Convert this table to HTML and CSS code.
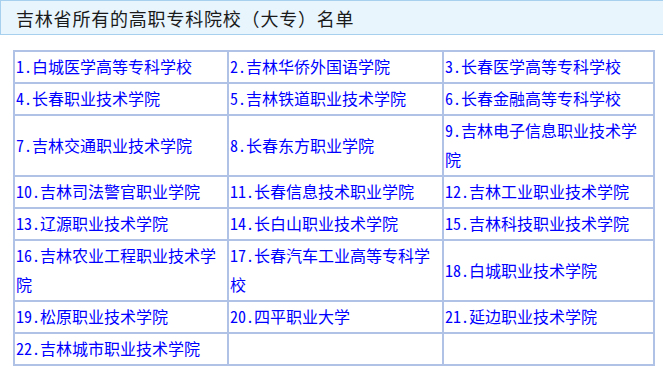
FILE: index.html
```html
<!DOCTYPE html>
<html lang="zh-CN">
<head>
<meta charset="utf-8">
<title>吉林省所有的高职专科院校（大专）名单</title>
<link rel="stylesheet" href="styles.css">
</head>
<body>
<div class="page">
  <h2 class="title">吉林省所有的高职专科院校（大专）名单</h2>
  <table class="list">
    <colgroup>
      <col class="c1"><col class="c2"><col class="c3">
    </colgroup>
    <tbody>
      <tr><td>1.白城医学高等专科学校</td><td>2.吉林华侨外国语学院</td><td>3.长春医学高等专科学校</td></tr>
      <tr><td>4.长春职业技术学院</td><td>5.吉林铁道职业技术学院</td><td>6.长春金融高等专科学校</td></tr>
      <tr><td>7.吉林交通职业技术学院</td><td>8.长春东方职业学院</td><td>9.吉林电子信息职业技术学院</td></tr>
      <tr><td>10.吉林司法警官职业学院</td><td>11.长春信息技术职业学院</td><td>12.吉林工业职业技术学院</td></tr>
      <tr><td>13.辽源职业技术学院</td><td>14.长白山职业技术学院</td><td>15.吉林科技职业技术学院</td></tr>
      <tr><td>16.吉林农业工程职业技术学院</td><td>17.长春汽车工业高等专科学校</td><td>18.白城职业技术学院</td></tr>
      <tr><td>19.松原职业技术学院</td><td>20.四平职业大学</td><td>21.延边职业技术学院</td></tr>
      <tr><td>22.吉林城市职业技术学院</td><td></td><td></td></tr>
    </tbody>
  </table>
</div>
</body>
</html>
```

FILE: styles.css
```css
html, body {
  margin: 0;
  padding: 0;
  background: #ffffff;
}

.page {
  width: 663px;
  overflow: hidden;
}

.title {
  margin: 0;
  height: 35px;
  width: 700px;
  box-sizing: border-box;
  background: #e8f5fd;
  border: 1px solid #a7d0ee;
  padding-left: 15px;
  font-family: "Noto Sans CJK SC", sans-serif;
  font-weight: normal;
  font-size: 18px;
  letter-spacing: 0.8px;
  line-height: 34px;
  color: #1a1a1a;
}

.list {
  margin: 15px 0 0 13px;
  border-collapse: collapse;
  table-layout: fixed;
  width: 640px;
  border: 2px solid #b0c3e6;
}

.c1 { width: 214px; }
.c2 { width: 215px; }
.c3 { width: 211px; }

.list td {
  border: 2px solid #b0c3e6;
  padding: 0 1px 1px 1px;
  font-family: "Noto Sans CJK SC", sans-serif;
  font-feature-settings: "hwid" 1;
  font-size: 16px;
  line-height: 29px;
  color: #0000ff;
  vertical-align: middle;
  word-break: break-all;
}
```
